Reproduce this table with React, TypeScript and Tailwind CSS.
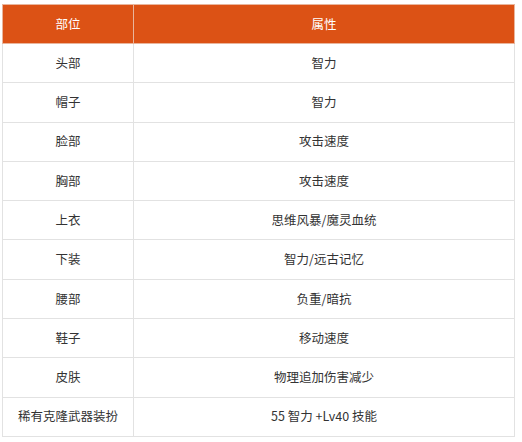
const rows: [string, string][] = [
  ["头部", "智力"],
  ["帽子", "智力"],
  ["脸部", "攻击速度"],
  ["胸部", "攻击速度"],
  ["上衣", "思维风暴/魔灵血统"],
  ["下装", "智力/远古记忆"],
  ["腰部", "负重/暗抗"],
  ["鞋子", "移动速度"],
  ["皮肤", "物理追加伤害减少"],
  ["稀有克隆武器装扮", "55 智力 +Lv40 技能"],
];

const App = () => {
  return (
    <div
      className="w-[522px] h-[442px] bg-white pl-[2px] pt-[4px]"
      style={{ fontFamily: '"Noto Sans CJK SC", "Noto Sans", sans-serif' }}
    >
      <table className="w-[513px] border-collapse text-[12.5px] text-[#333333]">
        <thead>
          <tr className="bg-[#dc5215] text-white">
            <th className="h-[39px] w-[131px] border border-[#e9b59c] font-normal">部位</th>
            <th className="h-[39px] border border-[#e9b59c] font-normal">属性</th>
          </tr>
        </thead>
        <tbody>
          {rows.map(([part, attr]) => (
            <tr key={part}>
              <td className="h-[39.3px] border border-[#e2e2e2] text-center">{part}</td>
              <td className="h-[39.3px] border border-[#e2e2e2] text-center">{attr}</td>
            </tr>
          ))}
        </tbody>
      </table>
    </div>
  );
};

export default App;
